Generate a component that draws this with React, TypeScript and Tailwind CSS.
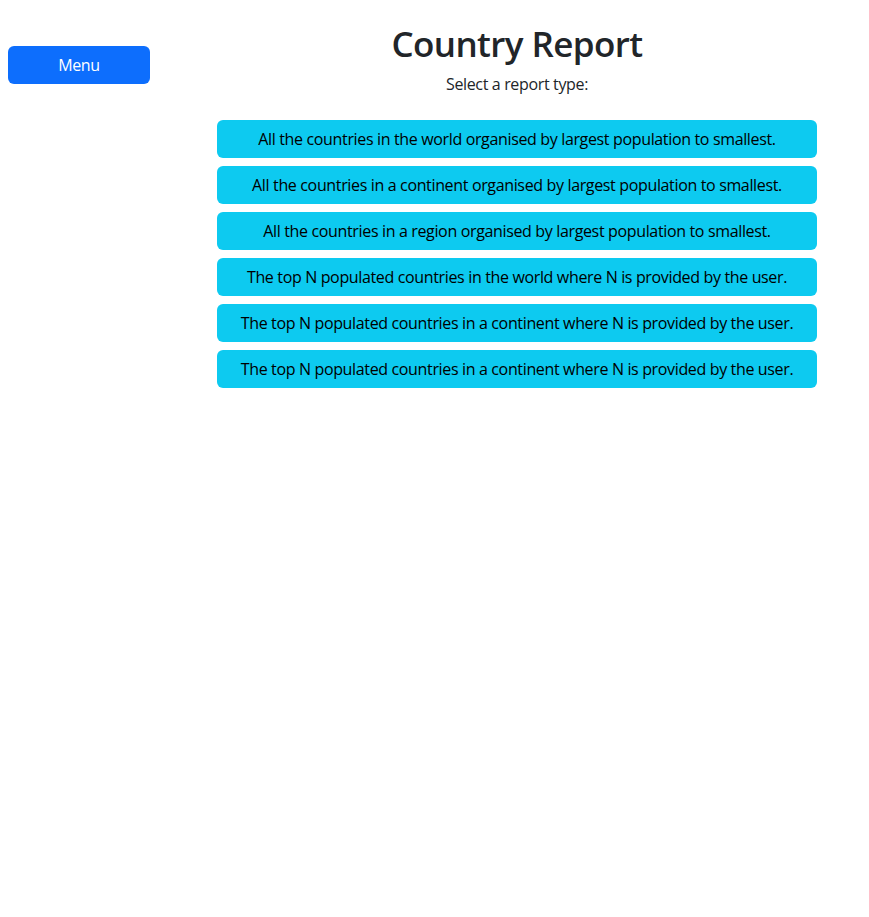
const reports = [
  'All the countries in the world organised by largest population to smallest.',
  'All the countries in a continent organised by largest population to smallest.',
  'All the countries in a region organised by largest population to smallest.',
  'The top N populated countries in the world where N is provided by the user.',
  'The top N populated countries in a continent where N is provided by the user.',
  'The top N populated countries in a continent where N is provided by the user.',
];

export default function App() {
  return (
    <div className="flex min-h-[917px] bg-white text-[#212529] font-['Open_Sans',sans-serif] tracking-[-0.35px]">
      {/* Sidebar */}
      <aside className="w-[165px] shrink-0 pl-2 pt-[46px]">
        <button
          type="button"
          className="w-[142px] h-[38px] rounded-md bg-[#0d6efd] text-white text-base"
        >
          Menu
        </button>
      </aside>

      {/* Report chooser */}
      <main className="flex-1 flex flex-col items-center pt-[23px]">
        <h1 className="text-[35px] leading-[42px] font-semibold tracking-[-0.6px] mb-[7px]">Country Report</h1>
        <p className="text-base leading-6 mb-[24px]">Select a report type:</p>
        <div className="flex flex-col gap-2 w-[600px]">
          {reports.map((r, i) => (
            <button
              key={i}
              type="button"
              className="h-[38px] rounded-md bg-[#0dcaf0] text-black text-base"
            >
              {r}
            </button>
          ))}
        </div>
      </main>
    </div>
  );
}
